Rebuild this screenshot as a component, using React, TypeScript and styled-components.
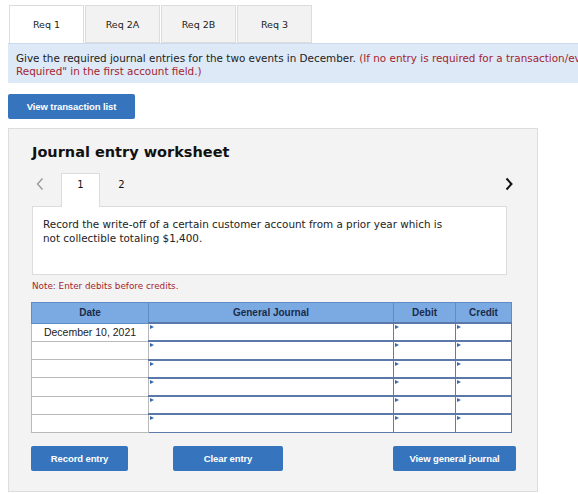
import React from "react";
import styled, { createGlobalStyle } from "styled-components";

const GlobalStyle = createGlobalStyle`
	html, body {
		margin: 0;
		padding: 0;
		background: #ffffff;
		overflow: hidden;
	}
	body {
		font-family: "DejaVu Sans", Verdana, sans-serif;
		color: #222;
	}
`;

const tabs = ["Req 1", "Req 2A", "Req 2B", "Req 3"];
const rows = ["December 10, 2021", "", "", "", "", ""];

const App: React.FC = () => {
	return (
		<>
			<GlobalStyle />
			<Page>
				<TabBar>
					{tabs.map((t, i) => (
						<Tab key={t} active={i === 0}>
							{t}
						</Tab>
					))}
				</TabBar>
				<InfoBand>
					<InfoLine>
						Give the required journal entries for the two events in December.{" "}
						<Red>(If no entry is required for a transaction/event, select "No Journal Entry</Red>
					</InfoLine>
					<InfoLine>
						<Red>Required" in the first account field.)</Red>
					</InfoLine>
				</InfoBand>
				<BlueButton width={127}>View transaction list</BlueButton>

				<Panel>
					<Title>Journal entry worksheet</Title>
					<NavRow>
						<Arrow muted>
							<svg width="10" height="14" viewBox="0 0 10 14">
								<path d="M7.5 1.5 L2.5 7 L7.5 12.5" fill="none" stroke="#9a9a9a" strokeWidth="1.4" />
							</svg>
						</Arrow>
						<PageTab active>1</PageTab>
						<PageTab>2</PageTab>
						<Spacer />
						<Arrow>
							<svg width="10" height="14" viewBox="0 0 10 14">
								<path d="M2.5 1.5 L7.5 7 L2.5 12.5" fill="none" stroke="#111" strokeWidth="2" />
							</svg>
						</Arrow>
					</NavRow>
					<EntryBox>
						Record the write-off of a certain customer account from a prior year which is
						<br />
						not collectible totaling $1,400.
					</EntryBox>
					<Note>Note: Enter debits before credits.</Note>

					<Journal>
						<thead>
							<tr>
								<Th style={{ width: 116 }}>Date</Th>
								<Th style={{ width: 244 }}>General Journal</Th>
								<Th style={{ width: 61 }}>Debit</Th>
								<Th>Credit</Th>
							</tr>
						</thead>
						<tbody>
							{rows.map((d, i) => (
								<tr key={i}>
									<DateCell>{d}</DateCell>
									<InputCell />
									<InputCell />
									<InputCell />
								</tr>
							))}
						</tbody>
					</Journal>

					<ButtonRow>
						<BlueButton width={97}>Record entry</BlueButton>
						<BlueButton width={110} style={{ marginLeft: 45 }}>
							Clear entry
						</BlueButton>
						<Spacer />
						<BlueButton width={123}>View general journal</BlueButton>
					</ButtonRow>
				</Panel>
			</Page>
		</>
	);
};

export default App;

const Page = styled.div`
	padding: 5px 0 0 8px;
	width: 570px;
`;

const TabBar = styled.div`
	display: flex;
	margin-left: 1px;
	height: 38px;
`;

const Tab = styled.div<{ active?: boolean }>`
	width: 75px;
	box-sizing: border-box;
	display: flex;
	align-items: center;
	justify-content: center;
	font-size: 9.5px;
	color: #222;
	background: ${(p) => (p.active ? "#ffffff" : "#f2f2f2")};
	border: 1px solid #dcdcdc;
	border-bottom: ${(p) => (p.active ? "none" : "1px solid #dcdcdc")};
	margin-right: 1px;
`;

const InfoBand = styled.div`
	width: 800px;
	height: 40px;
	box-sizing: border-box;
	padding: 8px 8px;
	background: #dde9f6;
	border-top: 1px solid #c9daee;
`;

const InfoLine = styled.div`
	font-size: 10.4px;
	line-height: 13px;
	white-space: nowrap;
	color: #222;
`;

const Red = styled.span`
	color: #a4242f;
`;

const BlueButton = styled.div<{ width: number }>`
	width: ${(p) => p.width}px;
	height: 25px;
	box-sizing: border-box;
	display: flex;
	align-items: center;
	justify-content: center;
	background: #3674bd;
	border-radius: 2px;
	color: #ffffff;
	font-family: "Liberation Sans", Arial, sans-serif;
	font-weight: bold;
	font-size: 9.5px;
	letter-spacing: -0.1px;
	margin-top: 11px;
`;

const Panel = styled.div`
	margin-top: 9px;
	width: 530px;
	height: 364px;
	box-sizing: border-box;
	background: #f3f3f3;
	border: 1px solid #dddddd;
	padding: 12px 25px 0 23px;
`;

const Title = styled.div`
	font-size: 14.5px;
	font-weight: bold;
	color: #111;
	height: 22px;
	line-height: 22px;
`;

const NavRow = styled.div`
	display: flex;
	align-items: flex-start;
	height: 34px;
	margin-top: 10px;
	padding-left: 1px;
`;

const Arrow = styled.div<{ muted?: boolean }>`
	width: 14px;
	height: 22px;
	display: flex;
	align-items: center;
	justify-content: center;
	margin-right: ${(p) => (p.muted ? "14px" : "-4px")};
`;

const PageTab = styled.div<{ active?: boolean }>`
	width: 39px;
	height: 34px;
	box-sizing: border-box;
	display: flex;
	align-items: flex-start;
	justify-content: center;
	padding-top: 5px;
	font-size: 10px;
	color: #111;
	background: ${(p) => (p.active ? "#ffffff" : "transparent")};
	border: 1px solid ${(p) => (p.active ? "#dcdcdc" : "transparent")};
	border-bottom: none;
	margin-right: 2px;
	margin-bottom: -1px;
	position: relative;
	z-index: 1;
`;

const Spacer = styled.div`
	flex: 1;
`;

const EntryBox = styled.div`
	width: 475px;
	height: 69px;
	box-sizing: border-box;
	margin-top: -1px;
	background: #ffffff;
	border: 1px solid #dcdcdc;
	padding: 10px 10px;
	font-size: 10.4px;
	line-height: 14px;
	color: #222;
`;

const Note = styled.div`
	margin-top: 5px;
	height: 12px;
	font-size: 8.8px;
	line-height: 12px;
	color: #a4242f;
`;

const Journal = styled.table`
	margin-top: 10px;
	margin-left: -1px;
	width: 481px;
	border-collapse: collapse;
	table-layout: fixed;
	font-family: "Liberation Sans", Arial, sans-serif;
`;

const Th = styled.th`
	height: 19px;
	padding: 0;
	background: #7aaae1;
	border: 1px solid #5f8cc6;
	color: #1b2b4c;
	font-size: 10px;
	font-weight: bold;
	text-align: center;
`;

const DateCell = styled.td`
	height: 16.3px;
	padding: 0;
	background: #ffffff;
	border: 1px solid #b9b9b9;
	font-size: 10.5px;
	color: #222;
	text-align: center;
`;

const InputCell = styled.td`
	height: 16.3px;
	padding: 0;
	background: #ffffff;
	border: 1px solid #5d7cab;
	border-top: 2px solid #5a79a8;
	position: relative;

	&::before {
		content: "";
		position: absolute;
		left: 1px;
		top: 1px;
		border-left: 4px solid #3a68ad;
		border-top: 2.5px solid transparent;
		border-bottom: 2.5px solid transparent;
	}
`;

const ButtonRow = styled.div`
	display: flex;
	margin-top: 2px;
	margin-left: -1px;
	width: 485px;
`;
